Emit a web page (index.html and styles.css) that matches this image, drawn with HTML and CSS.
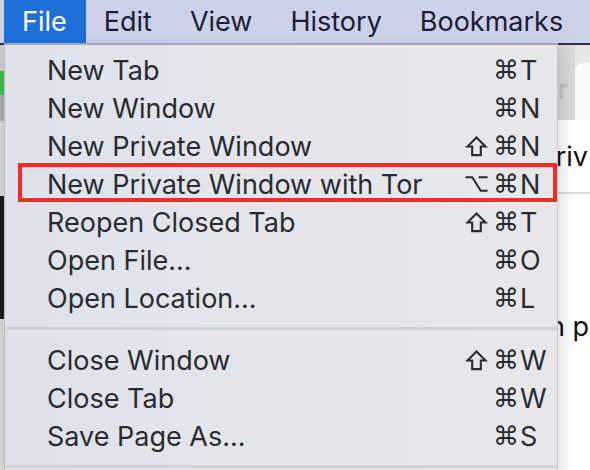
FILE: index.html
```html
<!DOCTYPE html>
<html lang="en">
<head>
    <meta charset="UTF-8">
    <meta name="viewport" content="width=device-width, initial-scale=1.0">
    <title>File menu</title>
    <link rel="stylesheet" href="styles.css">
</head>
<body>

    <!-- Top menu bar -->
    <div class="menubar">
        <span class="menubar-item active">File</span>
        <span class="menubar-item">Edit</span>
        <span class="menubar-item">View</span>
        <span class="menubar-item">History</span>
        <span class="menubar-item">Bookmarks</span>
    </div>

    <!-- Browser window behind the menu -->
    <div class="window">
        <div class="side-strip">
            <div class="strip-top"></div>
            <div class="strip-green"></div>
            <div class="strip-gray"></div>
            <div class="strip-light"></div>
            <div class="strip-dark"></div>
            <div class="strip-bottom"></div>
        </div>
        <div class="page">
            <div class="tabbar">
                <div class="tab-prev">r</div>
                <div class="tab-current"></div>
            </div>
            <div class="addressbar">priv</div>
            <div class="content">n p</div>
        </div>
    </div>

    <!-- File dropdown -->
    <div class="dropdown">
        <div class="menu-row">
            <span class="label">New Tab</span>
            <span class="shortcut"><span class="mod"></span><span class="cmd">⌘</span><span class="key">T</span></span>
        </div>
        <div class="menu-row">
            <span class="label">New Window</span>
            <span class="shortcut"><span class="mod"></span><span class="cmd">⌘</span><span class="key">N</span></span>
        </div>
        <div class="menu-row">
            <span class="label">New Private Window</span>
            <span class="shortcut">
                <span class="mod"><svg class="shift" viewBox="0 0 24 24"><path d="M12 2.5 L21.5 12 H16.5 V21 H7.5 V12 H2.5 Z"/></svg></span><span class="cmd">⌘</span><span class="key">N</span>
            </span>
        </div>
        <div class="menu-row marked">
            <span class="label">New Private Window with Tor</span>
            <span class="shortcut">
                <span class="mod"><svg class="option" viewBox="0 0 27 20"><path d="M0.5 2 H8.5 L18.5 18 H26.5 M16 2 H26.5"/></svg></span><span class="cmd">⌘</span><span class="key">N</span>
            </span>
        </div>
        <div class="menu-row">
            <span class="label">Reopen Closed Tab</span>
            <span class="shortcut">
                <span class="mod"><svg class="shift" viewBox="0 0 24 24"><path d="M12 2.5 L21.5 12 H16.5 V21 H7.5 V12 H2.5 Z"/></svg></span><span class="cmd">⌘</span><span class="key">T</span>
            </span>
        </div>
        <div class="menu-row">
            <span class="label">Open File...</span>
            <span class="shortcut"><span class="mod"></span><span class="cmd">⌘</span><span class="key">O</span></span>
        </div>
        <div class="menu-row">
            <span class="label">Open Location...</span>
            <span class="shortcut"><span class="mod"></span><span class="cmd">⌘</span><span class="key">L</span></span>
        </div>
        <div class="separator"></div>
        <div class="menu-row">
            <span class="label">Close Window</span>
            <span class="shortcut">
                <span class="mod"><svg class="shift" viewBox="0 0 24 24"><path d="M12 2.5 L21.5 12 H16.5 V21 H7.5 V12 H2.5 Z"/></svg></span><span class="cmd">⌘</span><span class="key">W</span>
            </span>
        </div>
        <div class="menu-row">
            <span class="label">Close Tab</span>
            <span class="shortcut"><span class="mod"></span><span class="cmd">⌘</span><span class="key">W</span></span>
        </div>
        <div class="menu-row">
            <span class="label">Save Page As...</span>
            <span class="shortcut"><span class="mod"></span><span class="cmd">⌘</span><span class="key">S</span></span>
        </div>
        <div class="separator bottom"></div>
    </div>

</body>
</html>
```

FILE: styles.css
```css
body {
    margin: 0;
    width: 590px;
    height: 470px;
    overflow: hidden;
    position: relative;
    font-family: Inter, "Noto Sans", sans-serif;
    background: #ffffff;
}

/* menu bar */
.menubar {
    height: 43px;
    display: flex;
    align-items: stretch;
    padding-left: 4px;
    background: #cdd0e9;
    border-bottom: 2px solid #2c3050;
}
.menubar-item {
    display: flex;
    align-items: center;
    padding: 0 20px 0 18px;
    font-size: 27px;
    color: #1b1d36;
}
.menubar-item.active {
    background: #1f6fd9;
    color: #ffffff;
    padding: 0 19px 0 18px;
}

/* window behind */
.window {
    display: flex;
    height: 425px;
}
.side-strip {
    width: 4px;
    display: flex;
    flex-direction: column;
}
.strip-top { height: 26px; background: #c9c9c9; }
.strip-green { height: 24px; background: #3db94f; }
.strip-gray { height: 26px; background: #a9a9a9; }
.strip-light { height: 75px; background: #d2d2d2; }
.strip-dark { height: 123px; background: #1b1b1b; }
.strip-bottom { flex: 1; background: #d4d4d4; }

.page {
    flex: 1;
    display: flex;
    flex-direction: column;
    background: #ffffff;
}
.tabbar {
    height: 75px;
    background: #e6e6e6;
    display: flex;
}
.tab-prev {
    width: 17px;
    margin-left: auto;
    padding-top: 30px;
    background: #d9d9d9;
    color: #c2c2c2;
    font-size: 26px;
    line-height: 30px;
    overflow: hidden;
}
.tab-current {
    width: 15px;
    margin-top: 18px;
    background: #fafafa;
    border-radius: 8px 0 0 0;
}
.addressbar {
    height: 72px;
    border-bottom: 2px solid #dedede;
    display: flex;
    align-items: center;
    justify-content: flex-end;
    font-size: 27px;
    color: #111111;
    padding-right: 2px;
}
.content {
    flex: 1;
    font-size: 27px;
    color: #111111;
    text-align: right;
    padding-top: 116px;
    padding-right: 1px;
}

/* dropdown */
.dropdown {
    position: absolute;
    left: 4px;
    top: 43px;
    width: 554px;
    height: 432px;
    padding-top: 6px;
    box-sizing: border-box;
    background: linear-gradient(90deg, #dce1ea 0%, #e3e5eb 40%, #e7e7eb 100%);
    border-top: 2px solid #a2a4b6;
    border-left: 1px solid #b9bcc4;
    border-right: 1px solid #c9cacf;
    box-shadow: 6px 4px 14px rgba(0, 0, 0, 0.12);
}
.menu-row {
    height: 38px;
    display: flex;
    align-items: center;
    padding: 0 13px 0 42px;
    font-size: 27px;
    color: #2a2b30;
    position: relative;
}
.menu-row .label {
    flex: 1;
}
.shortcut {
    display: flex;
    align-items: center;
}
.shortcut .mod {
    width: 28px;
    height: 24px;
    padding-right: 5px;
    box-sizing: border-box;
    display: flex;
    align-items: center;
    justify-content: flex-end;
}
.shortcut svg {
    fill: none;
    stroke: #2b2c31;
    stroke-width: 2.2;
    stroke-linejoin: miter;
}
.shortcut .shift {
    width: 23px;
    height: 23px;
}
.shortcut .option {
    width: 27px;
    height: 20px;
    stroke-width: 2.4;
}
.shortcut .cmd {
    width: 27px;
    font-family: "DejaVu Sans", sans-serif;
    font-size: 26px;
    text-align: left;
}
.shortcut .key {
    width: 24px;
    font-size: 27px;
    text-align: left;
}
.menu-row.marked::after {
    content: "";
    position: absolute;
    left: 13px;
    right: 0;
    top: -2px;
    bottom: 1px;
    border: 4px solid #ee2d24;
}
.separator {
    height: 3px;
    background: #d1d2d8;
    margin: 10px 0 11px;
}
.separator.bottom {
    margin-top: 10px;
}
```
